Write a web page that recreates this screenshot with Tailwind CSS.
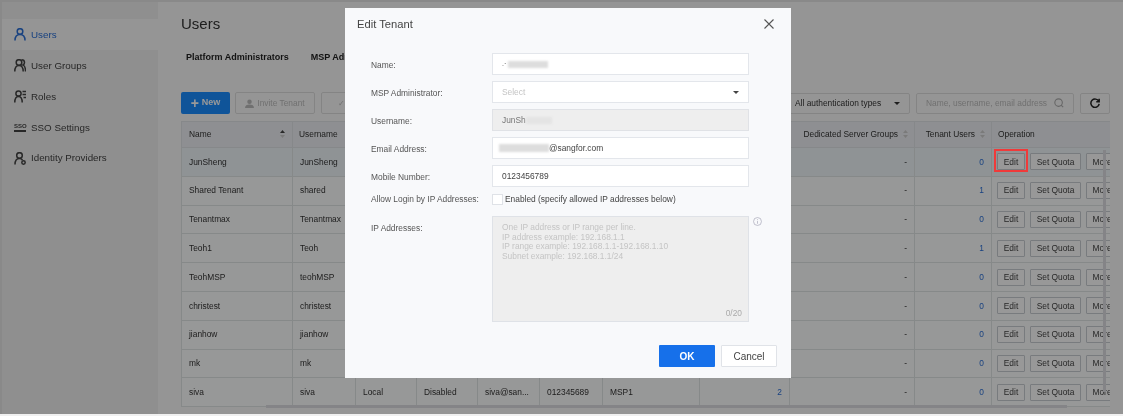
<!DOCTYPE html>
<html lang="en">
<head>
    <meta charset="UTF-8">
    <title>Edit Tenant</title>
    <script src="https://cdn.jsdelivr.net/npm/@tailwindcss/browser@4"></script>
</head>
<body class="bg-[#f0f0f0]">
<div class="relative w-[1123px] h-[416px] overflow-hidden font-['Liberation_Sans',Arial,sans-serif] text-[8.4px] text-[#333] blur-[0.5px]">

    <!-- page behind the dialog -->
    <div class="flex h-[414px] bg-[#e4e4e4] pt-[2px] pl-[2px]">
        <aside class="w-[156px] shrink-0 bg-[#eeeeee] pt-[17px] text-[9.800px] text-[#444]">
            <div class="flex items-center h-[31px] pl-[12px] gap-[5px] bg-[#f8f8f8] text-[#2b6fd6]">
                <svg class="w-[12px] h-[13px]" viewBox="0 0 12 13" fill="none" stroke="currentColor" stroke-width="1.500"><circle cx="6" cy="3.500" r="2.800"/><path d="M1 12.500c0-3.500 1.800-6 5-6s5 2.500 5 6"/></svg>
                <span class="pt-px">Users</span>
            </div>
            <div class="flex items-center h-[31px] pl-[12px] gap-[5px]">
                <svg class="w-[12px] h-[13px]" viewBox="0 0 12 13" fill="none" stroke="currentColor" stroke-width="1.500"><circle cx="5" cy="3.500" r="2.800"/><path d="M.8 12.500c0-3.500 1.500-6 4.200-6s4.200 2.500 4.200 6M7.500.8c2 0 3 1.200 3 2.700 0 1.200-.5 2-1.500 2.500 1.500.5 2.500 3 2.500 6.500"/></svg>
                <span class="pt-px">User Groups</span>
            </div>
            <div class="flex items-center h-[31px] pl-[12px] gap-[5px]">
                <svg class="w-[12px] h-[13px]" viewBox="0 0 12 13" fill="none" stroke="currentColor" stroke-width="1.500"><circle cx="4.500" cy="3.500" r="2.600"/><path d="M.8 12.500c0-3.500 1.300-6 3.700-6s3.700 2.500 3.700 6M8.500 1.500H12M8.500 4.500H12M9.500 7.500H12"/></svg>
                <span class="pt-px">Roles</span>
            </div>
            <div class="flex items-center h-[31px] pl-[12px] gap-[5px]">
                <span class="w-[12px] text-center border-b-2 border-[#444] text-[6px] font-bold leading-[7px]">SSO</span>
                <span class="pt-px">SSO Settings</span>
            </div>
            <div class="flex items-center h-[30px] pl-[12px] gap-[5px]">
                <svg class="w-[12px] h-[13px]" viewBox="0 0 12 13" fill="none" stroke="currentColor" stroke-width="1.500"><circle cx="5.500" cy="3.500" r="2.800"/><path d="M1 12.500c0-3.500 1.500-6 4.500-6 1.300 0 2.300.5 3 1.500"/><circle cx="9.500" cy="10.500" r="1.700"/></svg>
                <span class="pt-px">Identity Providers</span>
            </div>
        </aside>

        <main class="flex-1 min-w-0 pl-[23px] bg-[#f9f9f9]">
            <h1 class="text-[15px] leading-[18px] pt-[13px] text-[#333]">Users</h1>
            <div class="flex gap-[22px] pl-[5px] pt-[18px] text-[9px] leading-[12px] font-bold text-[#222]">
                <span>Platform Administrators</span>
                <span>MSP Administrators</span>
            </div>
            <div class="flex items-center h-[22px] mt-[29px] w-[929px]">
                <button class="flex items-center justify-center gap-[3px] w-[49px] h-[22px] rounded-[2px] bg-[#1a8cff] text-white text-[9px] font-semibold">
                    <span class="text-[14px] leading-[14px]">+</span> New
                </button>
                <button class="flex items-center justify-center gap-[3px] w-[80px] h-[22px] ml-[5px] border border-[#ddd] rounded-[2px] text-[#bbb]">
                    <svg class="w-[9px] h-[9px]" viewBox="0 0 10 10" fill="#bbb"><circle cx="5" cy="3" r="2.500"/><path d="M0 10c0-3 2-4 5-4s5 1 5 4z"/></svg>
                    Invite Tenant
                </button>
                <button class="w-[40px] h-[22px] ml-[6px] border border-[#ddd] rounded-[2px] text-[#bbb]">✓</button>
                <div class="flex items-center justify-between w-[125px] h-[21px] ml-auto px-[9px] border border-[#ddd] rounded-[2px]">
                    <span>All authentication types</span>
                    <span class="border-x-[3px] border-t-[3px] border-x-transparent border-t-[#333]"></span>
                </div>
                <div class="flex items-center justify-between w-[158px] h-[21px] ml-[6px] px-[9px] border border-[#ddd] rounded-[2px] text-[#bbb]">
                    <span class="whitespace-nowrap">Name, username, email address</span>
                    <svg class="w-[10px] h-[10px]" viewBox="0 0 12 12" fill="none" stroke="#aaa" stroke-width="1.300"><circle cx="5.500" cy="5.500" r="4.500"/><path d="M8.500 8.500 11 11"/></svg>
                </div>
                <button class="flex items-center justify-center w-[30px] h-[21px] ml-[6px] border border-[#ddd] rounded-[2px]">
                    <svg class="w-[10px] h-[10px]" viewBox="0 0 12 12" fill="none" stroke="#222" stroke-width="1.800"><path d="M10.500 4A5 5 0 1 0 11 7M11 1v3.500H7.500"/></svg>
                </button>
            </div>
            <div class="w-[929px] mt-[7px] overflow-hidden">
                <table class="w-[960px] table-fixed border-collapse text-left">
                    <colgroup>
                        <col class="w-[111px]"><col class="w-[63px]"><col class="w-[61px]"><col class="w-[61px]"><col class="w-[62px]"><col class="w-[63px]"><col class="w-[97px]"><col class="w-[90px]"><col class="w-[125px]"><col class="w-[77px]"><col>
                    </colgroup>
                    <thead class="bg-[#edeff3] text-[#333]">
                        <tr class="h-[26px]">
                            <th class="font-normal border border-[#dfe3e6] px-[7px]">
                                <span class="flex justify-between items-center">Name
                                    <svg class="w-[5px] h-[8px]" viewBox="0 0 5 8"><path d="M2.500 0 5 3H0z" fill="#444"/><path d="M2.500 8 5 5H0z" fill="#ccc"/></svg>
                                </span>
                            </th>
                            <th class="font-normal border border-[#dfe3e6] px-[6px]">Username</th>
                            <th class="border border-[#dfe3e6]"></th><th class="border border-[#dfe3e6]"></th><th class="border border-[#dfe3e6]"></th><th class="border border-[#dfe3e6]"></th><th class="border border-[#dfe3e6]"></th><th class="border border-[#dfe3e6]"></th>
                            <th class="font-normal border border-[#dfe3e6] pr-[6px]">
                                <span class="flex justify-end items-center gap-[5px] whitespace-nowrap">Dedicated Server Groups
                                    <svg class="w-[5px] h-[8px]" viewBox="0 0 5 8"><path d="M2.500 0 5 3H0zM2.500 8 5 5H0z" fill="#ccc"/></svg>
                                </span>
                            </th>
                            <th class="font-normal border border-[#dfe3e6] pr-[6px]">
                                <span class="flex justify-end items-center gap-[5px] whitespace-nowrap">Tenant Users
                                    <svg class="w-[5px] h-[8px]" viewBox="0 0 5 8"><path d="M2.500 0 5 3H0zM2.500 8 5 5H0z" fill="#ccc"/></svg>
                                </span>
                            </th>
                            <th class="font-normal border border-[#dfe3e6] px-[6px]">Operation</th>
                        </tr>
                    </thead>
                    <tbody id="rows"></tbody>
                </table>
            </div>
        </main>
    </div>

    <!-- table scrollbars -->
    <div class="absolute left-[1103px] top-[150px] w-[3px] h-[242px] bg-[#dcdce2]"></div>
    <div class="absolute left-[266px] top-[405px] w-[801px] h-[3px] bg-[#dcdce2]"></div>

    <!-- dimmed backdrop -->
    <div class="absolute left-0 top-0 w-full h-[414px] bg-black/40"></div>

    <!-- highlight drawn on the screenshot -->
    <div class="absolute left-[994px] top-[149px] w-[34px] h-[23px] border-2 border-[#f03a3a]"></div>

    <!-- dialog -->
    <div class="absolute left-[345px] top-[8px] w-[446px] h-[370px] bg-[#f8f9fb]">
        <div class="flex items-center justify-between h-[32px] pl-[12px] pr-[17px] text-[11.200px] text-[#444]">
            <span>Edit Tenant</span>
            <svg class="w-[10px] h-[10px]" viewBox="0 0 10 10" stroke="#555" stroke-width="1.100"><path d="M.5.500l9 9M9.500.500l-9 9"/></svg>
        </div>
        <div class="flex flex-col gap-[6px] pl-[26px] pt-[13px] text-[#555]">
            <div class="flex items-center">
                <label class="w-[121px] pt-[2px]">Name:</label>
                <div class="flex items-center w-[257px] h-[22px] pl-[9px] bg-white border border-[#e3e6eb] text-[#555]">
                    <span class="text-[7px]">.·</span>
                    <span class="w-[40px] h-[7px] ml-[2px] bg-[#dddddd] blur-[1px]"></span>
                </div>
            </div>
            <div class="flex items-center">
                <label class="w-[121px] pt-[2px]">MSP Administrator:</label>
                <div class="flex items-center justify-between w-[257px] h-[22px] px-[9px] bg-white border border-[#e3e6eb] text-[#c4c4c4]">
                    <span>Select</span>
                    <span class="border-x-[3px] border-t-[3px] border-x-transparent border-t-[#444]"></span>
                </div>
            </div>
            <div class="flex items-center">
                <label class="w-[121px] pt-[2px]">Username:</label>
                <div class="flex items-center w-[257px] h-[22px] pl-[9px] bg-[#eeeeee] border border-[#e0e2e6] text-[#777]">
                    <span class="w-[24px] overflow-hidden whitespace-nowrap">JunSh</span>
                    <span class="w-[26px] h-[7px] bg-[#e4e4e4] blur-[1px]"></span>
                </div>
            </div>
            <div class="flex items-center">
                <label class="w-[121px] pt-[2px]">Email Address:</label>
                <div class="flex items-center w-[257px] h-[22px] pl-[6px] bg-white border border-[#e3e6eb] text-[#444]">
                    <span class="w-[50px] h-[8px] bg-[#dddddd] blur-[1px]"></span>
                    <span>@sangfor.com</span>
                </div>
            </div>
            <div class="flex items-center">
                <label class="w-[121px] pt-[2px]">Mobile Number:</label>
                <div class="flex items-center w-[257px] h-[22px] pl-[9px] bg-white border border-[#e3e6eb] text-[#444]">0123456789</div>
            </div>
            <div class="flex items-center h-[14px] -mt-[1px]">
                <label class="w-[121px] whitespace-nowrap">Allow Login by IP Addresses:</label>
                <span class="w-[11px] h-[11px] bg-white border border-[#dfe2e7]"></span>
                <span class="ml-[2px] text-[#444]">Enabled (specify allowed IP addresses below)</span>
            </div>
            <div class="flex items-start mt-[4px]">
                <label class="w-[121px] pt-[6px]">IP Addresses:</label>
                <div class="relative w-[257px] h-[106px] pl-[9px] pt-[6px] bg-[#eeeeee] border border-[#dfe2e7] text-[#c4c4c4] leading-[9.600px]">
                    <p>One IP address or IP range per line.</p>
                    <p>IP address example: 192.168.1.1</p>
                    <p>IP range example: 192.168.1.1-192.168.1.10</p>
                    <p>Subnet example: 192.168.1.1/24</p>
                    <span class="absolute right-[6px] bottom-[2px] text-[#aaa]">0/20</span>
                </div>
                <svg class="w-[9px] h-[9px] ml-[4px] mt-[1px]" viewBox="0 0 10 10" fill="none" stroke="#aab" stroke-width=".8"><circle cx="5" cy="5" r="4.400"/><path d="M5 4.500v3M5 2.500v1"/></svg>
            </div>
        </div>
        <div class="flex justify-end gap-[6px] pr-[14px] pt-[23px] text-[10px]">
            <button class="w-[56px] h-[22px] bg-[#1670ea] text-white font-semibold rounded-[1px]">OK</button>
            <button class="w-[56px] h-[22px] bg-white border border-[#e0e3e8] text-[#444] rounded-[1px]">Cancel</button>
        </div>
    </div>
</div>

<script>
    // table rows, name / username / tenant users
    const tenants = [
        ['JunSheng', 'JunSheng', 0],
        ['Shared Tenant', 'shared', 1],
        ['Tenantmax', 'Tenantmax', 0],
        ['Teoh1', 'Teoh', 1],
        ['TeohMSP', 'teohMSP', 0],
        ['christest', 'christest', 0],
        ['jianhow', 'jianhow', 0],
        ['mk', 'mk', 0],
        ['siva', 'siva', 0]
    ];
    const cell = 'border border-[#dfe5e5] px-[7px] whitespace-nowrap overflow-hidden';
    const opBtn = 'h-[17px] border border-[#c9cdd2] rounded-[1px] bg-[#fdfdfd] text-[#444]';
    document.getElementById('rows').innerHTML = tenants.map((t, i) => {
        const last = i === tenants.length - 1;
        return `<tr class="h-[28.8px] ${i === 0 ? 'bg-[#eef5f9]' : 'bg-[#fcfdfd]'}">
            <td class="${cell}">${t[0]}</td>
            <td class="${cell}">${t[1]}</td>
            <td class="${cell}">${last ? 'Local' : ''}</td>
            <td class="${cell}">${last ? 'Disabled' : ''}</td>
            <td class="${cell}">${last ? 'siva@san...' : ''}</td>
            <td class="${cell}">${last ? '012345689' : ''}</td>
            <td class="${cell}">${last ? 'MSP1' : ''}</td>
            <td class="${cell} text-right text-[#2b6fd6]">${last ? '2' : ''}</td>
            <td class="${cell} text-right">-</td>
            <td class="${cell} text-right text-[#2b6fd6]">${t[2]}</td>
            <td class="${cell} !px-[5px]"><div class="flex gap-[5px]">
                <button class="${opBtn} w-[28px]">Edit</button>
                <button class="${opBtn} w-[51px]">Set Quota</button>
                <button class="${opBtn} w-[32px] shrink-0">More</button>
            </div></td>
        </tr>`;
    }).join('');
</script>
</body>
</html>
